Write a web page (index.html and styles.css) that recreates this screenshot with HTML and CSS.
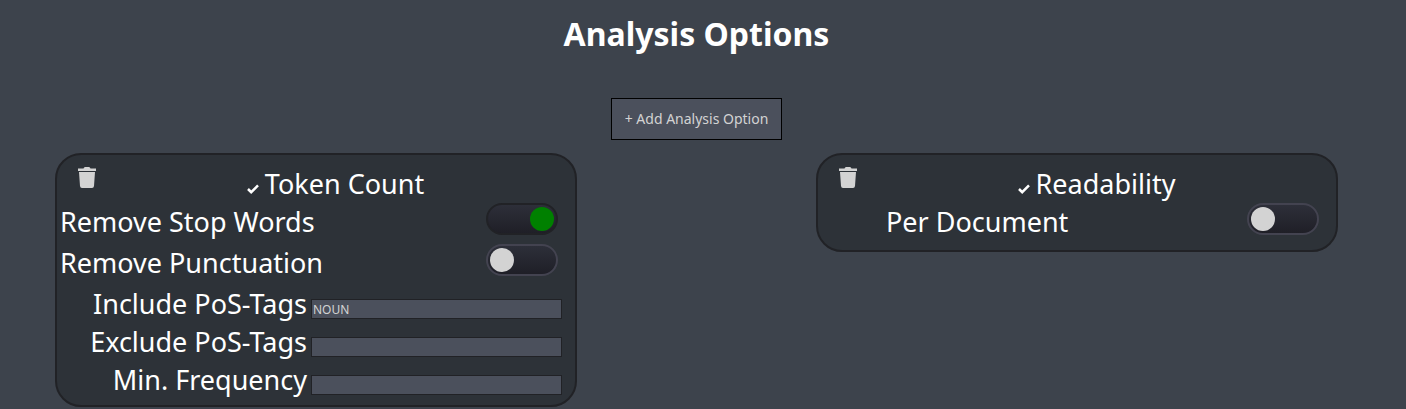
FILE: index.html
```html
<!DOCTYPE html>
<html lang="en">
<head>
<meta charset="utf-8">
<meta name="viewport" content="width=device-width, initial-scale=1">
<title>Analysis Options</title>
<link rel="stylesheet" href="styles.css">
</head>
<body>
<main class="page">
  <h1 class="page-title">Analysis Options</h1>
  <button class="add-option" type="button">+ Add Analysis Option</button>
  <div class="cards">
    <section class="card">
      <header class="card-header">
        <button class="delete" type="button" aria-label="Delete Token Count">
          <svg class="trash" viewBox="0 0 18 21" aria-hidden="true"><path d="M0 1.500h5.500Q6 0 7 0h4q1 0 1.500 1.500H18V4H0zM1 5h16l-1 14q-.2 2-2 2H4q-1.800 0-2-2z"/></svg>
        </button>
        <h2 class="card-title"><svg class="check" viewBox="0 0 12 10" aria-hidden="true"><path d="M1 5l3.200 3.200L11 1.400"/></svg>Token Count</h2>
      </header>
      <div class="toggle-row">
        <label for="stop-words">Remove Stop Words</label>
        <input class="toggle" id="stop-words" type="checkbox" role="switch" checked>
      </div>
      <div class="toggle-row">
        <label for="punctuation">Remove Punctuation</label>
        <input class="toggle" id="punctuation" type="checkbox" role="switch">
      </div>
      <div class="field-row">
        <label for="include">Include PoS-Tags</label>
        <input class="field" id="include" type="text" value="NOUN">
      </div>
      <div class="field-row">
        <label for="exclude">Exclude PoS-Tags</label>
        <input class="field" id="exclude" type="text">
      </div>
      <div class="field-row">
        <label for="frequency">Min. Frequency</label>
        <input class="field" id="frequency" type="text">
      </div>
    </section>
    <section class="card">
      <header class="card-header">
        <button class="delete" type="button" aria-label="Delete Readability">
          <svg class="trash" viewBox="0 0 18 21" aria-hidden="true"><path d="M0 1.500h5.500Q6 0 7 0h4q1 0 1.500 1.500H18V4H0zM1 5h16l-1 14q-.2 2-2 2H4q-1.800 0-2-2z"/></svg>
        </button>
        <h2 class="card-title"><svg class="check" viewBox="0 0 12 10" aria-hidden="true"><path d="M1 5l3.200 3.200L11 1.400"/></svg>Readability</h2>
      </header>
      <div class="toggle-row toggle-row-inset">
        <label for="per-document">Per Document</label>
        <input class="toggle" id="per-document" type="checkbox" role="switch">
      </div>
    </section>
  </div>
</main>
</body>
</html>
```
FILE: styles.css
```css
* {
  box-sizing: border-box;
}

body {
  margin: 0;
  background: #3d434c;
  color: #fff;
  font-family: "Noto Sans", "Open Sans", sans-serif;
  font-size: 27px;
  line-height: 38px;
}

.page {
  display: flex;
  flex-direction: column;
  align-items: center;
  padding: 12px 68px 0 55px;
}

.page-title {
  margin: 0 0 42px;
  font-size: 32px;
  line-height: 44px;
  font-weight: 700;
}

.add-option {
  height: 42px;
  margin-bottom: 13px;
  padding: 0 13px;
  border: 1px solid #000;
  background: #4b505c;
  color: #d3d3d3;
  font: inherit;
  font-size: 14px;
  line-height: 20px;
}

.cards {
  display: flex;
  flex-wrap: wrap;
  justify-content: space-between;
  align-items: flex-start;
  gap: 16px;
  width: 100%;
}

.card {
  flex: 0 1 522px;
  padding: 10px 0 6px;
  border: 2px solid #212226;
  border-radius: 26px;
  background: #2d3238;
}

.card-header {
  display: flex;
  align-items: flex-start;
}

.delete {
  display: flex;
  padding: 2px 0 0 21px;
  border: 0;
  background: none;
  color: #d3d3d3;
}

.trash {
  width: 18px;
  height: 21px;
  fill: currentColor;
}

.card-title {
  flex: 1;
  margin: 0;
  font-size: 27px;
  font-weight: 400;
  text-align: center;
}

.check {
  width: 12px;
  height: 10px;
  margin-right: 6px;
  fill: none;
  stroke: currentColor;
  stroke-width: 2.500;
}

.toggle-row {
  display: flex;
  align-items: flex-start;
  justify-content: space-between;
  padding: 0 17px 3px 3px;
}

.toggle-row-inset {
  padding-left: 68px;
}

.toggle {
  appearance: none;
  display: flex;
  width: 72px;
  height: 32px;
  margin: 0;
  padding: 2px;
  border: 2px solid #434350;
  border-radius: 16px;
  background: linear-gradient(#2d2f39, #1f1f27);
}

.toggle::before {
  content: "";
  width: 24px;
  height: 24px;
  border-radius: 50%;
  background: #d3d3d3;
}

.toggle:checked {
  justify-content: flex-end;
  border-color: #212226;
}

.toggle:checked::before {
  background: #008000;
}

.field-row {
  display: grid;
  grid-template-columns: 1fr 251px;
  column-gap: 4px;
  align-items: end;
  padding-right: 13px;
  text-align: right;
}

.field {
  width: 100%;
  height: 20px;
  margin: 0 0 4px;
  padding: 0 1px;
  border: 1px solid #212226;
  border-radius: 0;
  background: #4b505c;
  color: #d3d3d3;
  font: inherit;
  font-size: 12px;
  line-height: 18px;
}
```
